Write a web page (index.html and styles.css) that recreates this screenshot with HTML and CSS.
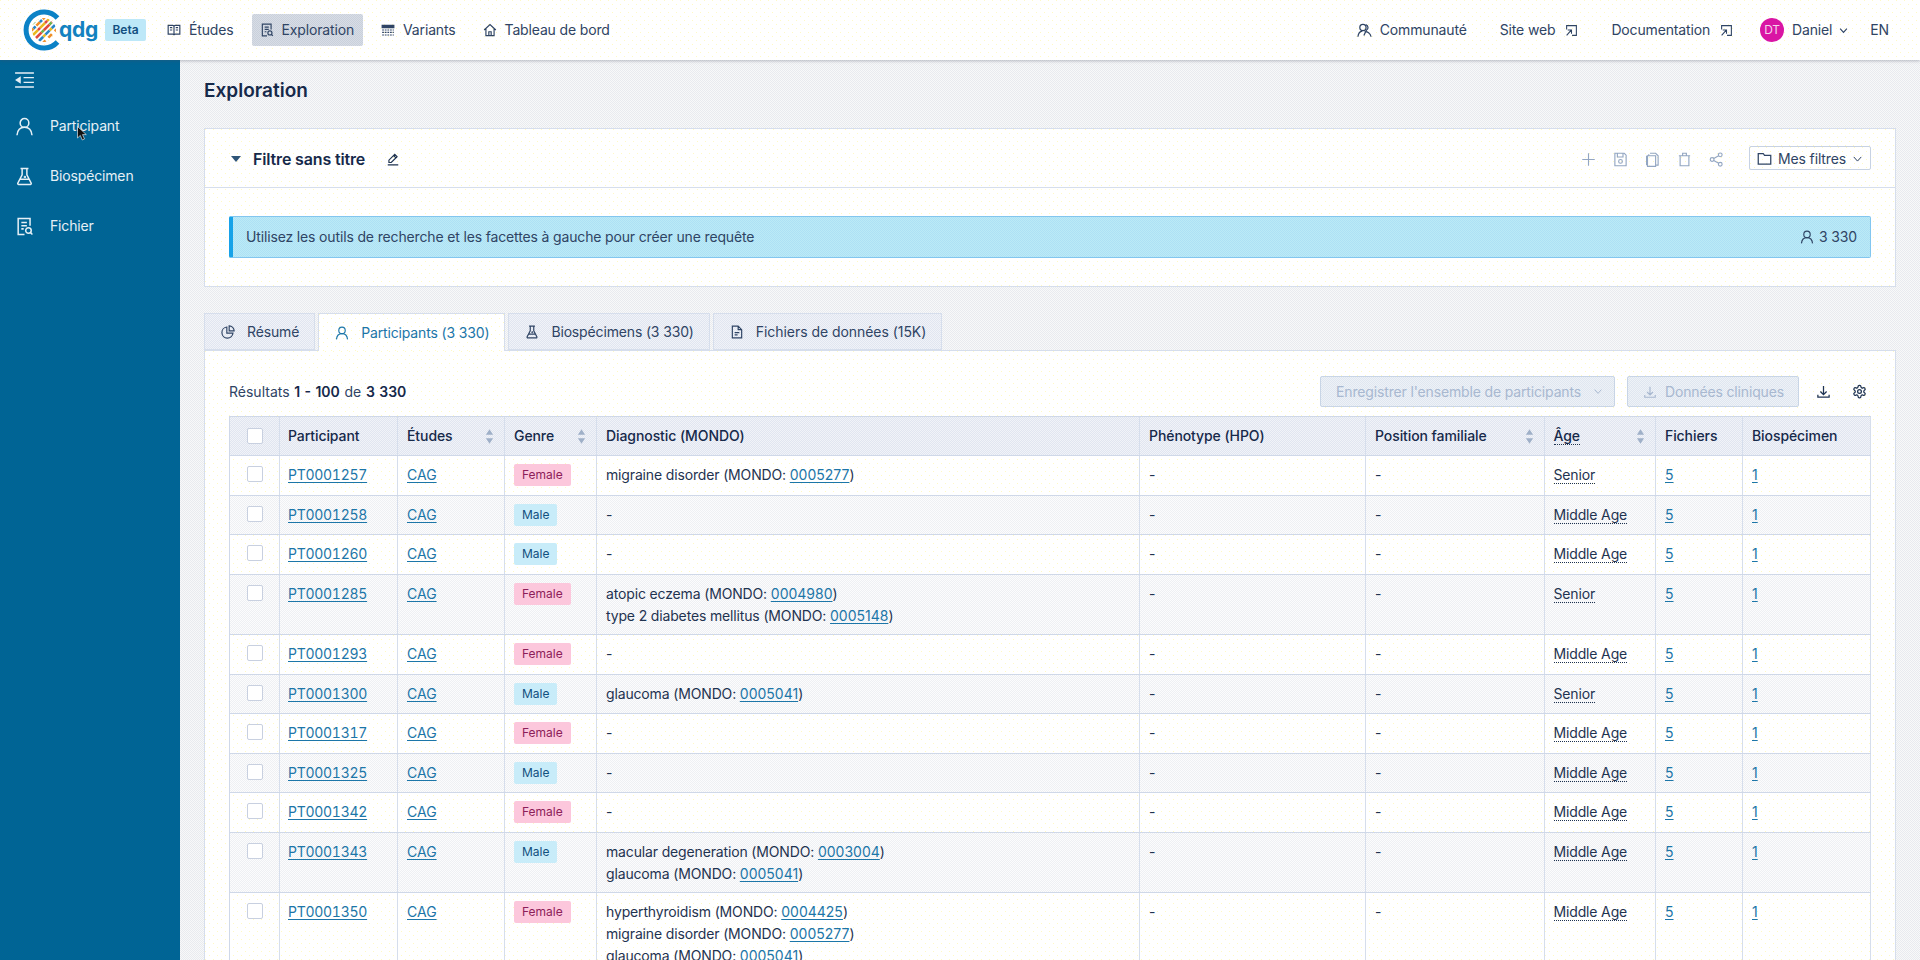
FILE: index.html
```html
<!DOCTYPE html>
<html lang="fr">
<head>
<meta charset="utf-8">
<title>Exploration</title>
<link rel="stylesheet" href="styles.css">
</head>
<body>
<svg class="sprite" xmlns="http://www.w3.org/2000/svg">
  <symbol id="i-user" viewBox="0 0 24 24"><circle cx="12" cy="7.500" r="5.500"/><path d="M2.500 23c.6-6.500 4.500-10 9.500-10s8.900 3.500 9.500 10"/></symbol>
  <symbol id="i-flask" viewBox="0 0 24 24"><path d="M7 2h10M9 2v8L3.500 20.500A1.200 1.200 0 0 0 4.600 22h14.800a1.200 1.200 0 0 0 1.100-1.500L15 10V2M6.500 15.500h11"/><circle cx="12.500" cy="12.500" r=".6"/></symbol>
  <symbol id="i-filesearch" viewBox="0 0 24 24"><path d="M19 11V2H4v20h8M8 7h7M8 11h7M8 15h3"/><circle cx="17" cy="17" r="3.500"/><path d="M19.500 19.500L22 22"/></symbol>
  <symbol id="i-book" viewBox="0 0 24 24"><path d="M2 4h8c1.200 0 2 .8 2 2 0-1.200.8-2 2-2h8v15h-8c-1.200 0-2 .8-2 2 0-1.200-.8-2-2-2H2zM12 6v15M5 8h4M5 12h4M15 8h4M15 12h4"/></symbol>
  <symbol id="i-home" viewBox="0 0 24 24"><path d="M2 12L12 2.500 22 12M5 10v11.500h14V10M10 21.500V15h4v6.500"/></symbol>
  <symbol id="i-community" viewBox="0 0 24 24"><circle cx="9.500" cy="7" r="5"/><path d="M1.500 22c.5-5 3-8.500 7-9M14 2.500a5 5 0 0 1 1 9.200l-4 8.300M12 14c4.500-1 9.500 3 10.500 8"/></symbol>
  <symbol id="i-ext" viewBox="0 0 24 24"><path d="M3 10V3h18v18h-8M5 11h7v7M12 11l-9 10"/></symbol>
  <symbol id="i-chev" viewBox="0 0 24 24"><path d="M3 7l9 10 9-10"/></symbol>
  <symbol id="i-pen" viewBox="0 0 24 24"><path d="M3 22h18M5 18v-4L15 4l4 4L9 18zM13 6l4 4"/></symbol>
  <symbol id="i-plus" viewBox="0 0 24 24"><path d="M12 2v20M2 12h20"/></symbol>
  <symbol id="i-save" viewBox="0 0 24 24"><path d="M3 2h15l3 3v17H3zM7 2v6h9V2"/><circle cx="12" cy="15" r="3"/></symbol>
  <symbol id="i-copy" viewBox="0 0 24 24"><path d="M8 2h9l4 4v15h-3M4 6h13v17H4zM6 3.500V6M2.500 6v15"/></symbol>
  <symbol id="i-trash" viewBox="0 0 24 24"><path d="M3 6h18M9 6V2h6v4M5 6v16h14V6"/></symbol>
  <symbol id="i-share" viewBox="0 0 24 24"><circle cx="18" cy="4.500" r="3"/><circle cx="5" cy="12" r="3"/><circle cx="18" cy="19.500" r="3"/><path d="M7.600 10.500l7.800-4.500M7.600 13.500l7.800 4.500"/></symbol>
  <symbol id="i-folder" viewBox="0 0 24 24"><path d="M2 4h8l2 3h10v14H2z"/></symbol>
  <symbol id="i-pie" viewBox="0 0 24 24"><path d="M10 3.500a9.500 9.500 0 1 0 10.500 10.500H10zM14 1.500V10h8.500A8.500 8.500 0 0 0 14 1.500z"/></symbol>
  <symbol id="i-file" viewBox="0 0 24 24"><path d="M14 2H4v20h16V8zM14 2v6h6M8 13h8M8 17h5"/></symbol>
  <symbol id="i-down" viewBox="0 0 24 24"><path d="M12 3v14M7 12l5 5 5-5M3 17v4h18v-4"/></symbol>
  <symbol id="i-gear" viewBox="0 0 24 24"><path d="M12.220 2h-.44a2 2 0 0 0-2 2v.18a2 2 0 0 1-1 1.730l-.43.25a2 2 0 0 1-2 0l-.15-.08a2 2 0 0 0-2.730.73l-.22.38a2 2 0 0 0 .73 2.730l.15.1a2 2 0 0 1 1 1.720v.51a2 2 0 0 1-1 1.740l-.15.09a2 2 0 0 0-.73 2.730l.22.38a2 2 0 0 0 2.730.73l.15-.08a2 2 0 0 1 2 0l.43.25a2 2 0 0 1 1 1.730V20a2 2 0 0 0 2 2h.44a2 2 0 0 0 2-2v-.18a2 2 0 0 1 1-1.730l.43-.25a2 2 0 0 1 2 0l.15.08a2 2 0 0 0 2.730-.73l.22-.39a2 2 0 0 0-.73-2.730l-.15-.08a2 2 0 0 1-1-1.740v-.5a2 2 0 0 1 1-1.740l.15-.09a2 2 0 0 0 .73-2.730l-.22-.38a2 2 0 0 0-2.730-.73l-.15.08a2 2 0 0 1-2 0l-.43-.25a2 2 0 0 1-1-1.730V4a2 2 0 0 0-2-2z"/><circle cx="12" cy="12" r="3"/></symbol>
  <symbol id="i-sort" viewBox="0 0 10 18"><path class="fill" d="M5 1l4 6H1zM5 17l4-6H1z"/></symbol>
</svg>

<header class="topbar">
  <div class="nav-left">
    <a class="logo">
      <svg class="logo-mark" viewBox="0 0 40 40">
        <defs><clipPath id="disc"><circle cx="20" cy="20" r="12"/></clipPath></defs>
        <path class="ring" d="M33.500 8A18 18 0 1 0 33.500 32"/>
        <g clip-path="url(#disc)" class="stripes">
          <path class="s-o" d="M6 22L22 6" stroke-dasharray="5 4"/>
          <path class="s-y" d="M9 25L25 9" stroke-dasharray="7 3"/>
          <path class="s-r" d="M12 28L28 12" stroke-dasharray="8 3"/>
          <path class="s-b" d="M15 31L31 15" stroke-dasharray="6 3"/>
          <path class="s-o" d="M18 34L34 18" stroke-dasharray="5 4"/>
          <path class="s-g" d="M3 19L19 3" stroke-dasharray="4 3"/>
          <path class="s-b" d="M6 22L22 6" stroke-dasharray="3 6" stroke-dashoffset="-5"/>
          <path class="s-r" d="M9 25L25 9" stroke-dasharray="3 7" stroke-dashoffset="-7"/>
          <path class="s-g" d="M12 28L28 12" stroke-dasharray="3 8" stroke-dashoffset="-8"/>
          <path class="s-y" d="M15 31L31 15" stroke-dasharray="3 6" stroke-dashoffset="-6"/>
        </g>
      </svg>
      <span class="logo-text">qdg</span>
    </a>
    <span class="beta">Beta</span>
    <nav class="main-nav">
      <a class="nav-item"><svg class="ic"><use href="#i-book"/></svg>Études</a>
      <a class="nav-item active"><svg class="ic"><use href="#i-filesearch"/></svg>Exploration</a>
      <a class="nav-item">
        <svg class="ic" viewBox="0 0 24 24"><path class="grid-top" d="M2 4h20v4H2z"/><path d="M2 12h20M2 16h20M2 20.500h20" stroke-dasharray="3 1.500"/></svg>Variants</a>
      <a class="nav-item"><svg class="ic"><use href="#i-home"/></svg>Tableau de bord</a>
    </nav>
  </div>
  <div class="nav-right">
    <a class="r-item community"><svg class="ic"><use href="#i-community"/></svg>Communauté</a>
    <a class="r-item">Site web<svg class="ic"><use href="#i-ext"/></svg></a>
    <a class="r-item">Documentation<svg class="ic"><use href="#i-ext"/></svg></a>
    <a class="r-user"><span class="avatar">DT</span>Daniel<svg class="chev"><use href="#i-chev"/></svg></a>
    <a class="r-lang">EN</a>
  </div>
</header>

<div class="layout">
  <aside class="sidebar">
    <div class="side-toggle">
      <svg class="toggle-ic" viewBox="0 0 20 17"><path d="M0 1h20M9 6h11M9 11h11M0 16h20"/><path class="fill" d="M6 4.500v8L0 8.500z"/></svg>
    </div>
    <a class="side-item"><svg class="side-ic"><use href="#i-user"/></svg>Participant</a>
    <a class="side-item"><svg class="side-ic"><use href="#i-flask"/></svg>Biospécimen</a>
    <a class="side-item"><svg class="side-ic"><use href="#i-filesearch"/></svg>Fichier</a>
    <svg class="cursor" viewBox="0 0 10 15"><path d="M0.500 0.500v11.500l2.800-2.600 2 4.600 2.200-1-2-4.400h3.800z"/></svg>
  </aside>

  <main class="content">
    <h1 class="page-title">Exploration</h1>

    <section class="filter-card">
      <div class="filter-head">
        <span class="caret"></span>
        <span class="filter-title">Filtre sans titre</span>
        <svg class="ic pen"><use href="#i-pen"/></svg>
        <div class="filter-tools">
          <span class="tool"><svg class="ic"><use href="#i-plus"/></svg></span>
          <span class="tool"><svg class="ic"><use href="#i-save"/></svg></span>
          <span class="tool"><svg class="ic"><use href="#i-copy"/></svg></span>
          <span class="tool"><svg class="ic"><use href="#i-trash"/></svg></span>
          <span class="tool"><svg class="ic"><use href="#i-share"/></svg></span>
        </div>
        <button class="my-filters"><svg class="ic"><use href="#i-folder"/></svg>Mes filtres<svg class="chev"><use href="#i-chev"/></svg></button>
      </div>
      <div class="filter-body">
        <div class="alert">
          <span>Utilisez les outils de recherche et les facettes à gauche pour créer une requête</span>
          <span class="alert-count"><svg class="ic"><use href="#i-user"/></svg>3 330</span>
        </div>
      </div>
    </section>

    <div class="tabs">
      <a class="tab"><svg class="ic"><use href="#i-pie"/></svg>Résumé</a>
      <a class="tab active"><svg class="ic"><use href="#i-user"/></svg>Participants (3 330)</a>
      <a class="tab"><svg class="ic"><use href="#i-flask"/></svg>Biospécimens (3 330)</a>
      <a class="tab"><svg class="ic"><use href="#i-file"/></svg>Fichiers de données (15K)</a>
    </div>

    <section class="results-card">
      <div class="toolbar">
        <div class="count">Résultats <b>1 - 100</b> de <b>3 330</b></div>
        <div class="actions">
          <button class="btn-off save-set">Enregistrer l'ensemble de participants<svg class="chev"><use href="#i-chev"/></svg></button>
          <button class="btn-off clinical"><svg class="ic"><use href="#i-down"/></svg>Données cliniques</button>
          <span class="act-ic first"><svg class="ic"><use href="#i-down"/></svg></span>
          <span class="act-ic"><svg class="ic"><use href="#i-gear"/></svg></span>
        </div>
      </div>

      <div class="table">
        <div class="row head">
          <div class="cell chk"><span class="box"></span></div>
          <div class="cell">Participant</div>
          <div class="cell sortable">Études<svg class="sort"><use href="#i-sort"/></svg></div>
          <div class="cell sortable">Genre<svg class="sort"><use href="#i-sort"/></svg></div>
          <div class="cell">Diagnostic (MONDO)</div>
          <div class="cell">Phénotype (HPO)</div>
          <div class="cell sortable">Position familiale<svg class="sort"><use href="#i-sort"/></svg></div>
          <div class="cell sortable"><span class="dotted">Âge</span><svg class="sort"><use href="#i-sort"/></svg></div>
          <div class="cell">Fichiers</div>
          <div class="cell">Biospécimen</div>
        </div>

        <div class="row">
          <div class="cell chk"><span class="box"></span></div>
          <div class="cell"><a class="lnk">PT0001257</a></div>
          <div class="cell"><a class="lnk">CAG</a></div>
          <div class="cell"><span class="tag female">Female</span></div>
          <div class="cell">migraine disorder (MONDO: <a class="lnk">0005277</a>)</div>
          <div class="cell">-</div><div class="cell">-</div>
          <div class="cell"><span class="dotted">Senior</span></div>
          <div class="cell"><a class="lnk">5</a></div><div class="cell"><a class="lnk">1</a></div>
        </div>
        <div class="row alt">
          <div class="cell chk"><span class="box"></span></div>
          <div class="cell"><a class="lnk">PT0001258</a></div>
          <div class="cell"><a class="lnk">CAG</a></div>
          <div class="cell"><span class="tag male">Male</span></div>
          <div class="cell">-</div>
          <div class="cell">-</div><div class="cell">-</div>
          <div class="cell"><span class="dotted">Middle Age</span></div>
          <div class="cell"><a class="lnk">5</a></div><div class="cell"><a class="lnk">1</a></div>
        </div>
        <div class="row">
          <div class="cell chk"><span class="box"></span></div>
          <div class="cell"><a class="lnk">PT0001260</a></div>
          <div class="cell"><a class="lnk">CAG</a></div>
          <div class="cell"><span class="tag male">Male</span></div>
          <div class="cell">-</div>
          <div class="cell">-</div><div class="cell">-</div>
          <div class="cell"><span class="dotted">Middle Age</span></div>
          <div class="cell"><a class="lnk">5</a></div><div class="cell"><a class="lnk">1</a></div>
        </div>
        <div class="row alt two">
          <div class="cell chk"><span class="box"></span></div>
          <div class="cell"><a class="lnk">PT0001285</a></div>
          <div class="cell"><a class="lnk">CAG</a></div>
          <div class="cell"><span class="tag female">Female</span></div>
          <div class="cell">atopic eczema (MONDO: <a class="lnk">0004980</a>)<br>type 2 diabetes mellitus (MONDO: <a class="lnk">0005148</a>)</div>
          <div class="cell">-</div><div class="cell">-</div>
          <div class="cell"><span class="dotted">Senior</span></div>
          <div class="cell"><a class="lnk">5</a></div><div class="cell"><a class="lnk">1</a></div>
        </div>
        <div class="row">
          <div class="cell chk"><span class="box"></span></div>
          <div class="cell"><a class="lnk">PT0001293</a></div>
          <div class="cell"><a class="lnk">CAG</a></div>
          <div class="cell"><span class="tag female">Female</span></div>
          <div class="cell">-</div>
          <div class="cell">-</div><div class="cell">-</div>
          <div class="cell"><span class="dotted">Middle Age</span></div>
          <div class="cell"><a class="lnk">5</a></div><div class="cell"><a class="lnk">1</a></div>
        </div>
        <div class="row alt">
          <div class="cell chk"><span class="box"></span></div>
          <div class="cell"><a class="lnk">PT0001300</a></div>
          <div class="cell"><a class="lnk">CAG</a></div>
          <div class="cell"><span class="tag male">Male</span></div>
          <div class="cell">glaucoma (MONDO: <a class="lnk">0005041</a>)</div>
          <div class="cell">-</div><div class="cell">-</div>
          <div class="cell"><span class="dotted">Senior</span></div>
          <div class="cell"><a class="lnk">5</a></div><div class="cell"><a class="lnk">1</a></div>
        </div>
        <div class="row">
          <div class="cell chk"><span class="box"></span></div>
          <div class="cell"><a class="lnk">PT0001317</a></div>
          <div class="cell"><a class="lnk">CAG</a></div>
          <div class="cell"><span class="tag female">Female</span></div>
          <div class="cell">-</div>
          <div class="cell">-</div><div class="cell">-</div>
          <div class="cell"><span class="dotted">Middle Age</span></div>
          <div class="cell"><a class="lnk">5</a></div><div class="cell"><a class="lnk">1</a></div>
        </div>
        <div class="row alt">
          <div class="cell chk"><span class="box"></span></div>
          <div class="cell"><a class="lnk">PT0001325</a></div>
          <div class="cell"><a class="lnk">CAG</a></div>
          <div class="cell"><span class="tag male">Male</span></div>
          <div class="cell">-</div>
          <div class="cell">-</div><div class="cell">-</div>
          <div class="cell"><span class="dotted">Middle Age</span></div>
          <div class="cell"><a class="lnk">5</a></div><div class="cell"><a class="lnk">1</a></div>
        </div>
        <div class="row">
          <div class="cell chk"><span class="box"></span></div>
          <div class="cell"><a class="lnk">PT0001342</a></div>
          <div class="cell"><a class="lnk">CAG</a></div>
          <div class="cell"><span class="tag female">Female</span></div>
          <div class="cell">-</div>
          <div class="cell">-</div><div class="cell">-</div>
          <div class="cell"><span class="dotted">Middle Age</span></div>
          <div class="cell"><a class="lnk">5</a></div><div class="cell"><a class="lnk">1</a></div>
        </div>
        <div class="row alt two">
          <div class="cell chk"><span class="box"></span></div>
          <div class="cell"><a class="lnk">PT0001343</a></div>
          <div class="cell"><a class="lnk">CAG</a></div>
          <div class="cell"><span class="tag male">Male</span></div>
          <div class="cell">macular degeneration (MONDO: <a class="lnk">0003004</a>)<br>glaucoma (MONDO: <a class="lnk">0005041</a>)</div>
          <div class="cell">-</div><div class="cell">-</div>
          <div class="cell"><span class="dotted">Middle Age</span></div>
          <div class="cell"><a class="lnk">5</a></div><div class="cell"><a class="lnk">1</a></div>
        </div>
        <div class="row">
          <div class="cell chk"><span class="box"></span></div>
          <div class="cell"><a class="lnk">PT0001350</a></div>
          <div class="cell"><a class="lnk">CAG</a></div>
          <div class="cell"><span class="tag female">Female</span></div>
          <div class="cell">hyperthyroidism (MONDO: <a class="lnk">0004425</a>)<br>migraine disorder (MONDO: <a class="lnk">0005277</a>)<br>glaucoma (MONDO: <a class="lnk">0005041</a>)</div>
          <div class="cell">-</div><div class="cell">-</div>
          <div class="cell"><span class="dotted">Middle Age</span></div>
          <div class="cell"><a class="lnk">5</a></div><div class="cell"><a class="lnk">1</a></div>
        </div>
      </div>
    </section>
  </main>
</div>
</body>
</html>
```

FILE: styles.css
```css
:root {
  --ink: #1f3350;
  --ink-soft: #2f4464;
  --link: #1c76a8;
  --line: #d6deec;
  --line-strong: #cfd8e8;
  --surface:
    radial-gradient(circle at .5px .5px, #fff9c4 .7px, transparent .7px) 0 0 / 8px 8px,
    radial-gradient(circle at .5px .5px, #fff9c4 .7px, transparent .7px) 4px 4px / 8px 8px,
    #ffffff;
  --dither-page: repeating-conic-gradient(#f8f9f9 0 25%, #e8eaef 0 50%) 0 0 / 2px 2px;
  --dither-side: repeating-conic-gradient(#006a8e 0 25%, #005f9c 0 50%) 0 0 / 2px 2px;
  --dither-head: repeating-conic-gradient(#f1f3f8 0 25%, #e0e5f0 0 50%) 0 0 / 2px 2px;
  --dither-row: repeating-conic-gradient(#fcfcfd 0 25%, #eef0f3 0 50%) 0 0 / 2px 2px;
  --dither-alert: repeating-conic-gradient(#bcebf6 0 25%, #ade0f5 0 50%) 0 0 / 2px 2px;
}

* { box-sizing: border-box; }

html, body { height: 100%; }

body {
  margin: 0;
  height: 960px;
  overflow: hidden;
  font-family: Inter, "Liberation Sans", sans-serif;
  font-size: 14px;
  line-height: 22px;
  letter-spacing: -.15px;
  color: var(--ink);
  background: var(--dither-page);
}

.sprite { position: absolute; width: 0; height: 0; }

svg { fill: none; stroke: currentColor; stroke-width: 2; flex: none; }
.fill { fill: currentColor; stroke: none; }
.ic { width: 14px; height: 14px; }
.chev { width: 9px; height: 9px; stroke-width: 3; }

/* Top bar */
.topbar {
  position: relative;
  z-index: 2;
  height: 60px;
  padding: 0 31px 0 24px;
  display: flex;
  align-items: center;
  justify-content: space-between;
  background: var(--surface);
  box-shadow: 0 1px 3px rgba(70, 80, 100, .35);
}
.nav-left, .nav-right, .main-nav { display: flex; align-items: center; }

.logo { display: flex; align-items: center; width: 71px; }
.logo-mark { width: 40px; height: 40px; stroke-width: 5; overflow: visible; }
.ring { stroke: #0c82c6; }
.stripes path { stroke-width: 2.600; }
.s-y { stroke: #e9b91f; }
.s-r { stroke: #df4b3f; }
.s-b { stroke: #2a86c9; }
.s-o { stroke: #ef8f2a; }
.s-g { stroke: #6fb04a; }
.logo-text { margin-left: -5px; font-size: 21px; font-weight: 700; color: #1382c0; letter-spacing: -.3px; }

.beta {
  margin-left: 10px;
  width: 41px;
  height: 22px;
  display: flex;
  align-items: center;
  justify-content: center;
  background: #bde8f8;
  border-radius: 2px;
  font-size: 12px;
  font-weight: 600;
  letter-spacing: 0;
  color: #124f80;
}
.main-nav { margin-left: 12px; gap: 9px; }
.nav-item {
  height: 32px;
  padding: 0 9px;
  display: flex;
  align-items: center;
  gap: 8px;
  border-radius: 2px;
  color: var(--ink-soft);
}
.nav-item.active { padding-left: 8px; background: repeating-conic-gradient(#d8dde6 0 25%, #c9d0db 0 50%) 0 0 / 2px 2px; }
.grid-top { fill: currentColor; }

.r-item { display: flex; align-items: center; gap: 10px; margin-right: 33px; color: var(--ink-soft); }
.r-item .ic { width: 13px; height: 13px; }
.r-item.community { gap: 8px; }
.r-item.community .ic { width: 15px; height: 15px; }
.r-user { display: flex; align-items: center; margin-left: -6px; color: var(--ink-soft); }
.avatar {
  width: 24px;
  height: 24px;
  margin-right: 8px;
  display: flex;
  align-items: center;
  justify-content: center;
  border-radius: 50%;
  background: #d915a4;
  color: #f3d4ea;
  font-size: 12px;
}
.r-user .chev { margin-left: 7px; width: 9px; height: 9px; }
.r-lang { margin-left: 22px; color: var(--ink-soft); }

/* Frame */
.layout { display: flex; height: 900px; }

.sidebar {
  position: relative;
  width: 180px;
  flex: none;
  background: var(--dither-side);
  color: #e6f0f6;
}
.side-toggle { height: 41px; padding: 12px 0 0 15px; }
.toggle-ic { display: block; width: 19px; height: 16px; stroke-width: 1.500; }
.side-item { height: 50px; padding-left: 15px; display: flex; align-items: center; gap: 16px; }
.side-ic { width: 19px; height: 19px; stroke-width: 1.900; }
.cursor { position: absolute; left: 77px; top: 66px; width: 10px; height: 15px; fill: #111; stroke: #fff; stroke-width: .6; }

.content { flex: 1; min-width: 0; padding: 0 24px; }

.page-title { margin: 17px 0 23px; font-size: 19px; line-height: 28px; font-weight: 600; letter-spacing: 0; color: #16294a; }

/* Filter */
.filter-card { height: 159px; background: var(--surface); border: 1px solid var(--line); }
.filter-head {
  height: 59px;
  padding: 0 24px;
  display: flex;
  align-items: center;
  border-bottom: 1px solid var(--line);
}
.caret {
  margin: 1px 10px 0 2px;
  width: 0;
  height: 0;
  border: 5px solid transparent;
  border-top: 6px solid #2f5578;
  border-bottom: 0;
}
.filter-title { margin: 2px 0 0 2px; font-size: 16px; font-weight: 600; color: #16294a; }
.pen { margin: 2px 0 0 21px; }
.filter-tools { margin: 2px 17px 0 auto; display: flex; color: #93a6c2; }
.filter-tools .ic { width: 15px; height: 15px; stroke-width: 1.800; }
.tool { width: 32px; display: flex; justify-content: center; }
.my-filters {
  width: 122px;
  height: 24px;
  padding: 1px 7px 0;
  display: flex;
  align-items: center;
  justify-content: space-between;
  background: var(--surface);
  border: 1px solid #c7d2e3;
  border-radius: 2px;
  font: inherit;
  letter-spacing: -.15px;
  color: var(--ink-soft);
}
.my-filters .ic { width: 15px; height: 15px; }
.my-filters .chev { width: 11px; height: 10px; stroke-width: 2.400; }
.filter-body { padding: 28px 24px 0; }
.alert {
  height: 42px;
  padding: 0 13px;
  display: flex;
  align-items: center;
  justify-content: space-between;
  background: var(--dither-alert);
  border: 1px solid #82c6ef;
  border-left: 4px solid #17a2e8;
  border-radius: 2px;
  color: var(--ink-soft);
}
.alert-count { display: flex; align-items: center; gap: 5px; }

/* Tabs */
.tabs { margin-top: 26px; height: 37px; display: flex; gap: 3px; position: relative; z-index: 1; }
.tab {
  height: 37px;
  padding: 0 15px 0 16px;
  display: flex;
  align-items: center;
  gap: 12px;
  background: var(--dither-head);
  border: 1px solid var(--line);
  color: var(--ink-soft);
}
.tab:last-child { letter-spacing: -.05px; }
.tab.active { height: 38px; background: var(--surface); border-bottom: 0; color: var(--link); }

/* Results */
.results-card {
  height: 700px;
  padding: 25px 24px 0;
  background: var(--surface);
  border: 1px solid var(--line);
}
.toolbar { height: 31px; margin-bottom: 9px; display: flex; align-items: center; justify-content: space-between; }
.count { color: var(--ink-soft); letter-spacing: 0; word-spacing: .8px; }
.count b { font-weight: 600; color: #16294a; }
.actions { display: flex; align-items: center; }
.btn-off {
  height: 31px;
  display: flex;
  align-items: center;
  background: repeating-conic-gradient(#eef2f7 0 25%, #dfe6f0 0 50%) 0 0 / 2px 2px;
  border: 1px solid #c8d5e6;
  border-radius: 2px;
  font: inherit;
  letter-spacing: -.15px;
  color: #a8b8d0;
}
.save-set { width: 295px; padding: 0 0 0 15px; gap: 12px; margin-right: 12px; }
.save-set .chev { width: 10px; height: 9px; stroke-width: 2.600; }
.clinical { width: 172px; padding: 0 0 0 15px; gap: 8px; }
.act-ic { width: 24px; display: flex; justify-content: center; color: #1f3350; }
.act-ic .ic { width: 15px; height: 15px; }
.act-ic.first { margin: 0 12px; }

.table { width: 1642px; border-top: 1px solid var(--line-strong); border-left: 1px solid var(--line-strong); }
.row {
  display: grid;
  grid-template-columns: 50px 118px 107px 92px 543px 226px 178.500px 111.500px 87px 128px;
  min-height: 39.500px;
  border-bottom: 1px solid var(--line-strong);
}
.row.two { min-height: 60.700px; }
.row.head { min-height: 39px; background: var(--dither-head); font-weight: 500; letter-spacing: -.08px; color: #16294a; }
.row.alt { background: var(--dither-row); }
.cell { padding: 8px 7px 0 9px; border-right: 1px solid var(--line); min-width: 0; }
.cell:nth-child(2) { padding-left: 8px; }
.head .cell { display: flex; align-items: center; padding-top: 0; }
.head .sortable { justify-content: space-between; padding-right: 10px; }
.sort { width: 9px; height: 17px; color: #9fb0c8; stroke: none; }
.head .chk { justify-content: center; padding-left: 0; padding-right: 0; }
.chk { display: flex; justify-content: center; padding: 10px 0 0; }
.box { display: block; width: 16px; height: 16px; background: #fff; border: 1px solid #c8d0e0; border-radius: 2px; }
.lnk { color: var(--link); text-decoration: underline; text-underline-offset: 2px; letter-spacing: 0; }
.cell:nth-child(2) .lnk { letter-spacing: -.27px; font-variant-numeric: tabular-nums; }
.dotted { border-bottom: 1px dotted var(--ink); line-height: 17px; display: inline-block; }
.tag {
  display: inline-block;
  height: 22px;
  padding: 0 8px;
  border-radius: 2px;
  font-size: 12px;
  line-height: 22px;
  letter-spacing: 0;
  vertical-align: top;
}
.female { background: #fcc7dc; color: #8d1d59; }
.male { background: #c8ecf9; color: #12507f; }
```
